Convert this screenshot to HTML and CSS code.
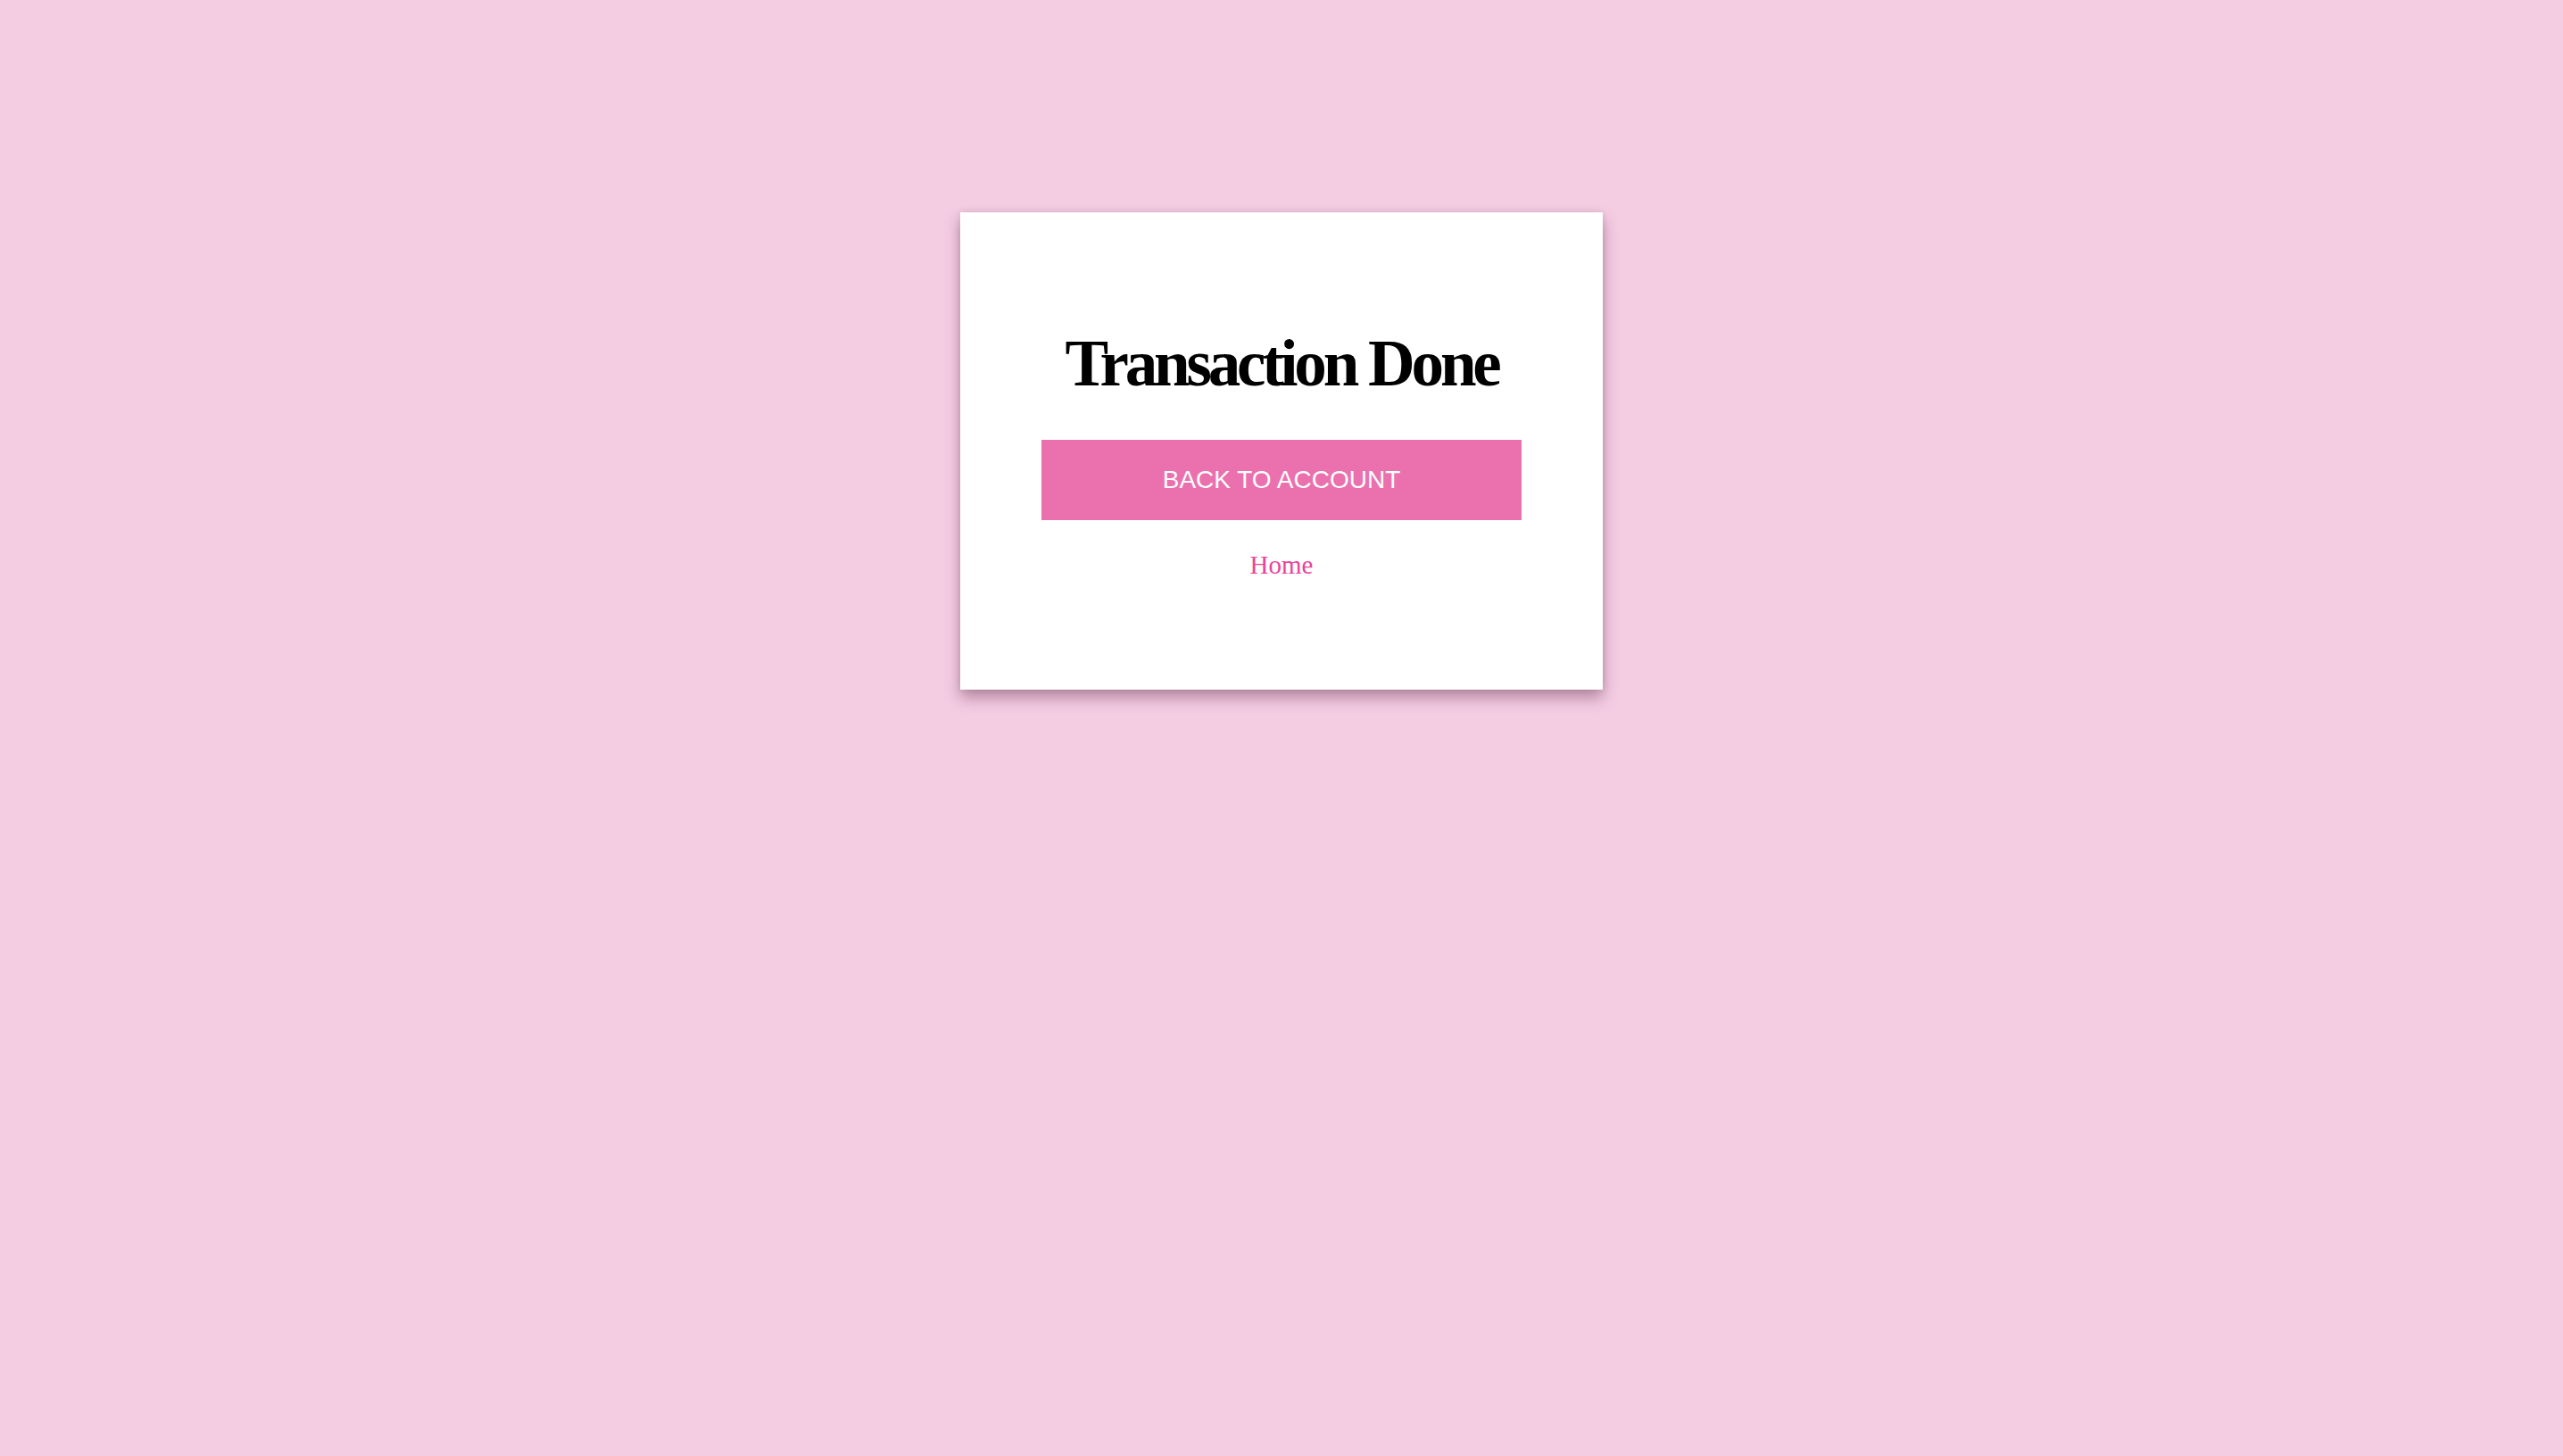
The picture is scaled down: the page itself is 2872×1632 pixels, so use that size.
FILE: index.html
```html
<!DOCTYPE html>
<html lang="en">
<head>
<meta charset="utf-8">
<title>Transaction Done</title>
<link rel="stylesheet" href="styles.css">
</head>
<body>
<main class="page">
  <section class="card">
    <h1 class="title">Transaction Done</h1>
    <button class="btn" type="button">BACK TO ACCOUNT</button>
    <a class="home" href="#">Home</a>
  </section>
</main>
</body>
</html>
```

FILE: styles.css
```css
html, body {
  margin: 0;
  padding: 0;
}
body {
  background: #f4cde3;
  font-family: "Liberation Serif", "Times New Roman", serif;
  min-height: 1632px;
}
.page {
  display: flex;
  justify-content: center;
  padding-top: 238px;
}
.card {
  width: 720px;
  height: 535px;
  box-sizing: border-box;
  background: #ffffff;
  box-shadow: 0 9px 16px rgba(80, 30, 60, 0.4), 0 0 6px rgba(80, 30, 60, 0.12);
  display: flex;
  flex-direction: column;
  align-items: center;
  padding-top: 130px;
}
.title {
  margin: 0;
  font-size: 73px;
  line-height: 80px;
  font-weight: bold;
  letter-spacing: -4.2px;
  color: #000;
}
.btn {
  margin-top: 45px;
  width: 538px;
  height: 90px;
  border: none;
  background: #ea71ad;
  color: #ffffff;
  font-family: "Liberation Sans", Arial, Helvetica, sans-serif;
  font-size: 28px;
  padding: 0;
  cursor: pointer;
}
.home {
  margin-top: 34px;
  font-size: 29px;
  color: #e8449a;
  text-decoration: none;
}
```
